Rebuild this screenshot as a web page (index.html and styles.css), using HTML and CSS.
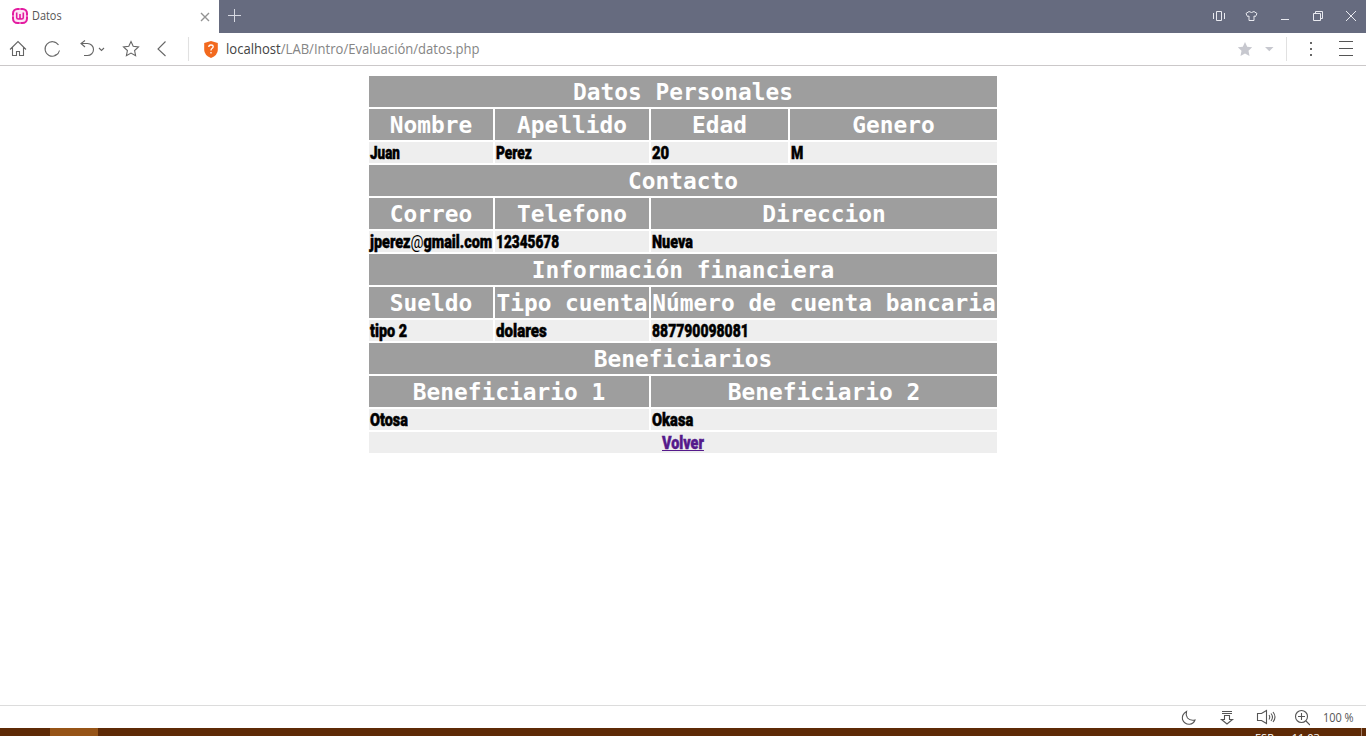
FILE: index.html
```html
<!DOCTYPE html>
<html lang="es">
<head>
<meta charset="utf-8">
<title>Datos</title>
<link rel="stylesheet" href="styles.css">
</head>
<body>
<header class="tabbar">
  <div class="tab">
    <svg class="logo" width="16" height="16" viewBox="0 0 16 16"><rect x="1" y="1" width="14" height="14" rx="4.500" fill="#fde6f5" stroke="#e31ba0" stroke-width="2"/><path d="M8 0v2M8 14v2M0 8h2M14 8h2" stroke="#f6a6da"/><path d="M4.700 4.500v5q0 1.500 1.600 1.500 1.700 0 1.700-1.500V6v3.500q0 1.500 1.700 1.500 1.600 0 1.600-1.500v-5" fill="none" stroke="#e31ba0" stroke-width="1.600"/></svg>
    <span class="tab-title"><span class="fit" data-width="30">Datos</span></span>
    <svg class="tab-close" width="10" height="10" viewBox="0 0 10 10"><path d="M1 1l8 8M9 1L1 9" stroke="#939393" stroke-width="1.400"/></svg>
  </div>
  <svg class="newtab" width="13" height="13" viewBox="0 0 13 13"><path d="M6.500 0v13M0 6.500h13" stroke="#d7d9e2"/></svg>
  <svg class="window-icons" width="146" height="33" viewBox="1210 0 146 33" fill="none" stroke="#e9eaf0">
    <path d="M1216.500 11.500h5v9h-5zM1213.500 13v6M1224.500 13v6"/>
    <path d="M1249 11.500l-3 2 1.500 3 1.500-.5v4.500h5V16l1.500.5 1.500-3-3-2q-2.500 2-5 0z"/>
    <path d="M1281 19.500h8"/>
    <path d="M1313.500 13.500h7v7h-7zM1315.500 13v-1.500h7v7h-1.500"/>
    <path d="M1346 11l10 10M1356 11l-10 10"/>
  </svg>
</header>
<nav class="toolbar">
  <svg class="nav-icons" width="190" height="32" viewBox="0 33 190 32" fill="none" stroke="#666" stroke-width="1.100">
    <path d="M10 49.500l8-8 8 8M12.500 47.500v8h4v-4h3v4h4v-8"/>
    <path d="M59.500 50.500a7.300 7.300 0 1 1-1-5.500M56.500 54.500l-2 1"/>
    <path d="M85 40.500l-4 3 4 3.500M81 43.500h6.500a6 6 0 0 1 0 12H84"/>
    <path d="M99 48l2.500 2.500L104 48"/>
    <path d="M131 41.500l2.200 4.800 5.300.6-3.900 3.600 1 5.200-4.600-2.600-4.600 2.600 1-5.200-3.900-3.600 5.300-.6z"/>
    <path d="M165.500 41.500l-7.500 7.500 7.500 7"/>
    <path d="M188.500 37v24" stroke="#e1e1e1"/>
  </svg>
  <svg class="shield" width="14" height="17" viewBox="0 0 14 17"><path d="M7 0l6.800 2v7q0 5-6.800 8Q.2 14 .2 9V2z" fill="#f2691e"/><path d="M4.800 6q0-2 2.200-2t2.200 1.800q0 1-1.200 1.700-1 .7-1 2M7 11v1.500" fill="none" stroke="#fff" stroke-width="1.300"/></svg>
  <span class="url"><span class="fit" data-width="254"><span class="host">localhost</span>/LAB/Intro/Evaluación/datos.php</span></span>
  <svg class="menu-icons" width="125" height="32" viewBox="1230 33 125 32">
    <path d="M1245 42l2.200 4.700 5 .6-3.700 3.500 1 5.200-4.500-2.600-4.500 2.600 1-5.200-3.700-3.500 5-.6zM1265 47h8.500l-4.200 4.200z" fill="#c7c8cf"/>
    <path d="M1286.500 37v24" stroke="#e1e1e1"/>
    <path d="M1310 42h2v2h-2zM1310 48h2v2h-2zM1310 54h2v2h-2z" fill="#666"/>
    <path d="M1339 41.500h14M1339 48.500h14M1339 55.500h14" stroke="#555"/>
  </svg>
</nav>
<main class="page">
  <div class="datos">
    <div class="head w4">Datos Personales</div>
    <div class="head">Nombre</div><div class="head">Apellido</div><div class="head">Edad</div><div class="head">Genero</div>
    <div class="cell"><span class="fit" data-width="30">Juan</span></div><div class="cell"><span class="fit" data-width="36">Perez</span></div><div class="cell"><span class="fit" data-width="17">20</span></div><div class="cell"><span class="fit" data-width="12">M</span></div>
    <div class="head w4">Contacto</div>
    <div class="head">Correo</div><div class="head">Telefono</div><div class="head w2">Direccion</div>
    <div class="cell"><span class="fit" data-width="122">jperez<span class="at">@</span>gmail.com</span></div><div class="cell"><span class="fit" data-width="63">12345678</span></div><div class="cell w2"><span class="fit" data-width="41">Nueva</span></div>
    <div class="head w4">Información financiera</div>
    <div class="head">Sueldo</div><div class="head">Tipo cuenta</div><div class="head w2">Número de cuenta bancaria</div>
    <div class="cell"><span class="fit" data-width="37">tipo 2</span></div><div class="cell"><span class="fit" data-width="51">dolares</span></div><div class="cell w2"><span class="fit" data-width="97">887790098081</span></div>
    <div class="head w4">Beneficiarios</div>
    <div class="head w2">Beneficiario 1</div><div class="head w2">Beneficiario 2</div>
    <div class="cell w2"><span class="fit" data-width="38">Otosa</span></div><div class="cell w2"><span class="fit" data-width="41">Okasa</span></div>
    <div class="cell w4 center"><a class="fit volver" data-width="42" href="#">Volver</a></div>
  </div>
</main>
<footer class="status">
  <svg width="130" height="22" viewBox="1180 706 130 22" fill="none" stroke="#555" stroke-width="1.100">
    <path d="M1186.500 711.500q-5 3-4 8 2 5 7 4.800 4-.3 5.500-4.300-5 1-7.500-2-2-3-1-6.500z"/>
    <path d="M1222 711.500h10M1222 713.500h10M1224.500 715.500h5v4h3l-5.500 4.500-5.500-4.500h3z"/>
    <path d="M1257.500 713.500h4l5-3v13l-5-3h-4zM1269 715q1.500 2 0 4.500M1271 713.500q3 3.500 0 7.500M1273 712q4 5 0 10"/>
    <circle cx="1301.500" cy="716.500" r="6"/><path d="M1298 716.500h7M1301.500 713v7M1306 721l4 4"/>
  </svg>
  <span class="zoom"><span class="fit" data-width="31">100 %</span></span>
</footer>
<div class="taskbar">
  <div class="task-active"></div>
  <div class="tray"><span>ESP</span><span class="clock">11:03</span></div>
</div>
<script src="fit.js"></script>
</body>
</html>
```
FILE: styles.css
```css
* { box-sizing: border-box; }
body { margin: 0; width: 1366px; height: 736px; overflow: hidden; background: #fff; display: flex; flex-direction: column; font-family: "Open Sans", sans-serif; }
svg { display: block; flex: none; }
.fit { display: inline-block; white-space: nowrap; transform-origin: 0 50%; }
.tabbar { height: 33px; flex: none; background: #666b7f; display: flex; align-items: center; }
.tab { width: 219px; height: 33px; background: #fff; display: flex; align-items: center; padding: 0 9px 2px 12px; }
.tab-title { width: 172px; flex: none; padding-left: 4px; font-size: 12px; color: #555; }
.tab-close { margin-top: 2px; }
.newtab { margin: 0 0 2px 9px; }
.window-icons { margin-left: auto; margin-right: 10px; overflow: visible; }
.toolbar { height: 33px; flex: none; border-bottom: 1px solid #cbc8c9; display: flex; align-items: center; }
.shield { margin-left: 14px; }
.url { margin-left: 8px; width: 300px; font-size: 14px; line-height: 20px; color: #858585; }
.host { color: #444; }
.menu-icons { margin-left: auto; margin-right: 11px; }
.page { flex: 1; padding: 10px 0 0 369px; }
.datos { display: grid; grid-template-columns: 124px 154px 137px 207px; gap: 2px; }
.head { height: 31px; background: #9e9e9e; color: #fff; text-align: center; white-space: nowrap; font: bold 22.84px/32px "DejaVu Sans Mono", monospace; }
.cell { height: 21px; padding-left: 1px; background: #eee; color: #000; white-space: nowrap; font: 900 17.5px/23px Roboto, sans-serif; -webkit-text-stroke: 0.5px currentColor; }
.at { font-weight: 400; -webkit-text-stroke: 0; }
.w2 { grid-column: span 2; }
.w4 { grid-column: span 4; }
.center { padding-left: 293px; }
.volver { color: #551a8b; text-decoration: underline; text-decoration-thickness: 1px; }
.status { height: 23px; flex: none; border-top: 1px solid #dcdcdc; display: flex; align-items: center; padding-left: 1180px; }
.zoom { margin-left: 13px; font-size: 12px; color: #555; }
.taskbar { height: 8px; flex: none; overflow: hidden; background: #5e2a06; display: flex; padding-left: 50px; }
.task-active { width: 48px; height: 8px; background: #965417; }
.tray { margin-left: 1157px; padding-top: 4px; display: flex; font-size: 11px; line-height: 12px; color: #fff; width: 107px; height: 8px; border-right: 1px solid #a58069; }
.clock { margin-left: 18px; }
```
FILE: fit.js
```js
// Condense each label horizontally to its intended width.
document.querySelectorAll('.fit').forEach(function (el) {
  var scale = Number(el.dataset.width) / el.offsetWidth;
  el.style.transform = 'scaleX(' + scale + ')';
});
```
